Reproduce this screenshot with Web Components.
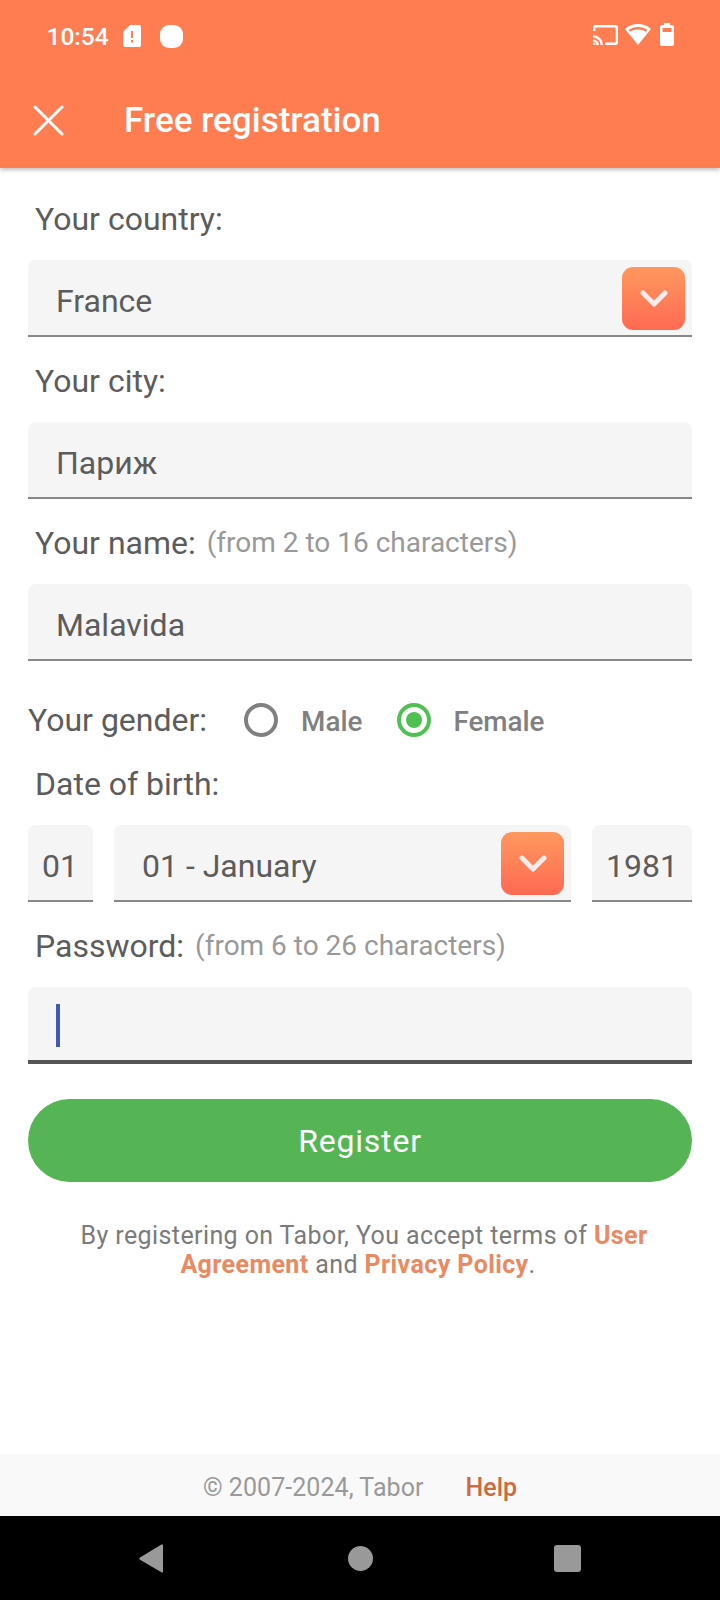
<!DOCTYPE html>
<html>
<head>
<meta charset="utf-8">
<title>Free registration</title>
<style>
  html, body { margin: 0; padding: 0; background: #fff; }
  body { font-family: Roboto, "Liberation Sans", sans-serif; color: #5c5c5c; }
</style>
</head>
<body>
<reg-app>
  <status-bar slot="top"></status-bar>
  <app-header slot="top">Free registration</app-header>

  <field-label>Your country:</field-label>
  <text-box arrow>France</text-box>

  <field-label>Your city:</field-label>
  <text-box>Париж</text-box>

  <field-label hint="(from 2 to 16 characters)">Your name:</field-label>
  <text-box>Malavida</text-box>

  <gender-row></gender-row>

  <field-label short>Date of birth:</field-label>
  <date-row>
    <text-box compact style="width:65px">01</text-box>
    <text-box compact arrow month style="width:457px">01 - January</text-box>
    <text-box compact style="width:100px">1981</text-box>
  </date-row>

  <field-label hint="(from 6 to 26 characters)">Password:</field-label>
  <text-box focused></text-box>

  <reg-button>Register</reg-button>

  <terms-note></terms-note>

  <app-footer slot="bottom"></app-footer>
  <nav-bar slot="bottom"></nav-bar>
</reg-app>

<script>
// small helper so each element only has to say what goes in its shadow root
class ShadowEl extends HTMLElement {
  constructor() {
    super();
    this.attachShadow({ mode: 'open' }).innerHTML = this.constructor.html;
  }
}

class RegApp extends ShadowEl {
  static html = `
    <style>
      :host { display: flex; flex-direction: column; width: 720px; height: 1600px; overflow: hidden; }
      main { flex: 1; display: flex; flex-direction: column; padding: 7px 28px 0; }
    </style>
    <slot name="top"></slot>
    <main><slot></slot></main>
    <slot name="bottom"></slot>`;
}

class StatusBar extends ShadowEl {
  static html = `
    <style>
      :host { display: flex; align-items: center; position: relative; z-index: 2; height: 72px; background: #ff7d50; color: #fff; padding: 0 46px 0 46.500px; box-sizing: border-box; font-size: 24.500px; font-weight: 500; }
      svg { display: block; fill: #fff; }
      .sim { margin-left: 14px; }
      .dot { margin-left: 19px; width: 23px; height: 23px; border-radius: 9px; background: #fff; }
      .right { margin: -3px 0 0 auto; display: flex; align-items: center; gap: 7px; }
    </style>
    <span>10:54</span>
    <svg class="sim" width="18" height="22" viewBox="0 0 18 22"><path fill-rule="evenodd" d="M7 0h9a2 2 0 0 1 2 2v18a2 2 0 0 1-2 2H2a2 2 0 0 1-2-2V7zM8 6v7h2V6zM8 15v2.500h2V15z"/></svg>
    <span class="dot"></span>
    <span class="right">
      <svg width="25" height="20" viewBox="0 0 25 20">
        <path fill="none" stroke="#fff" stroke-width="2.400" d="M1.200 6V2.500a1.300 1.300 0 0 1 1.300-1.300h20a1.300 1.300 0 0 1 1.300 1.300v15a1.300 1.300 0 0 1-1.300 1.300H12M0 11.200A8.800 8.800 0 0 1 8.800 20M0 15.400A4.600 4.600 0 0 1 4.600 20"/>
        <circle cx="1" cy="19" r="1.400"/>
      </svg>
      <svg width="26" height="21" viewBox="0 0 26 21"><path fill-rule="evenodd" d="M13 0c5 0 9.500 1.800 13 5L13 21 0 5c3.500-3.200 8-5 13-5zm0 3c-3.500 0-6.800 1.100-9.300 3l1.500 1.800C7.300 6.400 10 5.600 13 5.600s5.700.8 7.800 2.200L22.300 6C19.800 4.100 16.500 3 13 3z"/></svg>
      <svg width="14" height="23" viewBox="0 0 14 23" style="margin-left:2px"><path fill-rule="evenodd" d="M4 0h6v2h2a2 2 0 0 1 2 2v17a2 2 0 0 1-2 2H2a2 2 0 0 1-2-2V4a2 2 0 0 1 2-2h2zM2.500 5v4h9V5z"/></svg>
    </span>`;
}

class AppHeader extends ShadowEl {
  static html = `
    <style>
      :host { display: flex; align-items: center; position: relative; z-index: 1; height: 96px; padding: 0 0 0 33px; box-sizing: border-box; background: #ff7d50; color: #fff; font-size: 35px; font-weight: 500; box-shadow: 0 2px 4px rgba(0,0,0,.25); }
      svg { display: block; margin-right: 60px; }
    </style>
    <svg width="31" height="31" viewBox="0 0 31 31" fill="none" stroke="#fff" stroke-width="3" stroke-linecap="round"><path d="M2 2l27 27M29 2L2 29"/></svg>
    <slot></slot>`;
}

class FieldLabel extends ShadowEl {
  static html = `
    <style>
      :host { display: flex; align-items: baseline; height: 85px; line-height: 88px; padding-left: 7px; font-size: 32px; color: #5c5c5c; }
      :host([short]) { height: 83px; line-height: 84px; }
      span { align-self: flex-start; margin-left: 11px; font-size: 28px; line-height: 87px; color: #999; }
    </style>
    <slot></slot><span></span>`;
  connectedCallback() {
    this.shadowRoot.querySelector('span').textContent = this.getAttribute('hint') || '';
  }
}

class TextBox extends ShadowEl {
  static html = `
    <style>
      :host { display: flex; align-items: center; position: relative; height: 77px; box-sizing: border-box; padding: 7px 0 0 28px; background: #f5f5f5; border-bottom: 2px solid #888; border-radius: 8px 8px 0 0; font-size: 32px; color: #5c5c5c; }
      :host([compact]) { padding-left: 14px; }
      :host([month]) { padding-left: 28px; }
      :host([focused]) { border-bottom: 4px solid #555; padding-left: 28px; }
      i { display: none; width: 4px; height: 43px; margin-top: -3px; background: #3f5ab0; }
      :host([focused]) i { display: block; }
      .arrow { display: none; position: absolute; top: 7px; right: 7px; width: 63px; height: 63px; border-radius: 11px; background: linear-gradient(#ff985e, #ff6a52); align-items: center; justify-content: center; }
      :host([arrow]) .arrow { display: flex; }
    </style>
    <slot></slot><i></i>
    <span class="arrow">
      <svg width="28" height="18" viewBox="0 0 28 18" fill="none" stroke="#fdeaea" stroke-width="5" stroke-linecap="round" stroke-linejoin="round"><path d="M3 3l11 11L25 3"/></svg>
    </span>`;
}

class GenderRow extends ShadowEl {
  static html = `
    <style>
      :host { display: flex; align-items: center; height: 44px; margin-top: 37px; font-size: 32px; color: #5c5c5c; }
      .r { width: 34px; height: 34px; box-sizing: border-box; border-radius: 50%; border: 4px solid #808080; margin: 0 23px 0 37px; flex: none; }
      .r.on { border-color: #4fc152; display: flex; align-items: center; justify-content: center; margin: 0 22px 0 35px; }
      .r.on::after { content: ''; width: 16px; height: 16px; border-radius: 50%; background: #4fc152; }
      .t { padding-top: 3px; font-size: 27.800px; font-weight: 500; color: #808080; }
    </style>
    <span>Your gender:</span>
    <span class="r"></span><span class="t">Male</span>
    <span class="r on"></span><span class="t">Female</span>`;
}

class DateRow extends ShadowEl {
  static html = `
    <style>
      :host { display: flex; justify-content: space-between; }
    </style>
    <slot></slot>`;
}

class RegButton extends ShadowEl {
  static html = `
    <style>
      :host { display: flex; align-items: center; justify-content: center; height: 83px; margin-top: 35px; border-radius: 42px; background: #55b555; color: #fff; font-size: 32px; letter-spacing: .8px; }
    </style>
    <slot></slot>`;
}

class TermsNote extends ShadowEl {
  static html = `
    <style>
      :host { display: block; margin-top: 39px; font-size: 25px; line-height: 29px; letter-spacing: .4px; text-align: center; color: #7b7b7b; }
      div:first-of-type { padding-left: 8px; }
      div:last-of-type { padding-right: 4px; }
      b { font-weight: 700; color: #e98a63; }
    </style>
    <div>By registering on Tabor, You accept terms of <b>User</b></div>
    <div><b>Agreement</b> and <b>Privacy Policy</b>.</div>`;
}

class AppFooter extends ShadowEl {
  static html = `
    <style>
      :host { display: flex; align-items: center; justify-content: center; height: 62px; padding-top: 4px; box-sizing: border-box; background: #f9f9f9; font-size: 25px; color: #999; }
      span { letter-spacing: .05px; }
      b { margin-left: 42px; font-weight: 500; color: #cd6a40; }
    </style>
    <span>© 2007-2024, Tabor</span><b>Help</b>`;
}

class NavBar extends ShadowEl {
  static html = `
    <style>
      :host { display: flex; align-items: center; height: 84px; background: #000; padding: 0 0 0 139px; box-sizing: border-box; }
      svg { display: block; fill: #999; }
      .c { width: 25px; height: 25px; border-radius: 50%; background: #999; margin-left: 185px; }
      .s { width: 27px; height: 27px; border-radius: 3px; background: #999; margin-left: 181px; }
    </style>
    <svg width="24" height="29" viewBox="0 0 24 29"><path d="M24 1.500v26a1 1 0 0 1-1.600.8L1 15.800a1.500 1.500 0 0 1 0-2.400L22.400.6a1 1 0 0 1 1.600.9z"/></svg>
    <span class="c"></span>
    <span class="s"></span>`;
}

customElements.define('reg-app', RegApp);
customElements.define('status-bar', StatusBar);
customElements.define('app-header', AppHeader);
customElements.define('field-label', FieldLabel);
customElements.define('text-box', TextBox);
customElements.define('gender-row', GenderRow);
customElements.define('date-row', DateRow);
customElements.define('reg-button', RegButton);
customElements.define('terms-note', TermsNote);
customElements.define('app-footer', AppFooter);
customElements.define('nav-bar', NavBar);
</script>
</body>
</html>
